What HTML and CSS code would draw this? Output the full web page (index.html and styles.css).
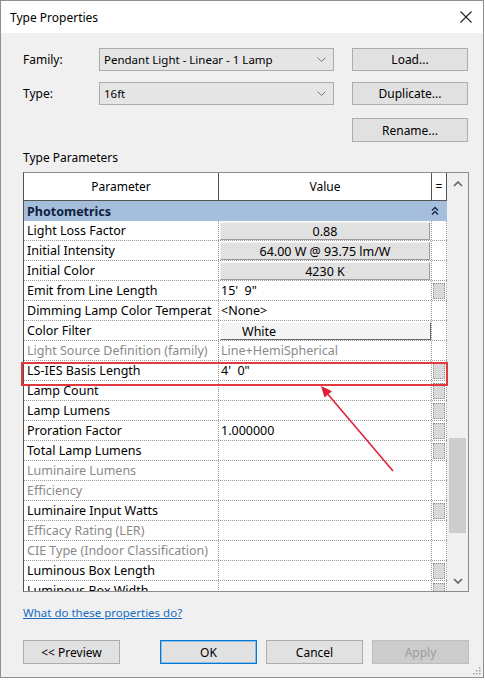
FILE: index.html
```html
<!DOCTYPE html>
<html>
<head>
<meta charset="utf-8">
<title>Type Properties</title>
<link rel="stylesheet" href="styles.css">
</head>
<body>
<div class="window">
  <div class="titlebar">
    <span class="title">Type Properties</span>
    <svg class="close" width="12" height="12" viewBox="0 0 12 12"><path d="M0.5 0.5 L11.5 11.5 M11.5 0.5 L0.5 11.5" stroke="#222" stroke-width="1.1" fill="none"/></svg>
  </div>
  <div class="content">
    <div class="form">
      <label class="flabel">Family:</label>
      <div class="combo"><span>Pendant Light - Linear - 1 Lamp</span><svg width="9" height="5" viewBox="0 0 9 5"><path d="M0.5 0.5 L4.5 4.5 L8.5 0.5" stroke="#7a7a7a" stroke-width="1" fill="none"/></svg></div>
      <button class="btn fbtn">Load...</button>
      <label class="flabel">Type:</label>
      <div class="combo"><span>16ft</span><svg width="9" height="5" viewBox="0 0 9 5"><path d="M0.5 0.5 L4.5 4.5 L8.5 0.5" stroke="#7a7a7a" stroke-width="1" fill="none"/></svg></div>
      <button class="btn fbtn">Duplicate...</button>
      <button class="btn fbtn rename">Rename...</button>
    </div>
    <div class="section-label">Type Parameters</div>
    <div class="gridbox">
      <div class="table">
        <div class="thead">
          <div>Parameter</div>
          <div>Value</div>
          <div class="eq">=</div>
        </div>
        <div class="group">
          <span>Photometrics</span>
          <svg width="8" height="10" viewBox="0 0 8 10"><path d="M1 4.5 L4 1.5 L7 4.5 M1 8.5 L4 5.5 L7 8.5" stroke="#1b2a4a" stroke-width="1.4" fill="none"/></svg>
        </div>
        <div class="row"><div class="cp">Light Loss Factor</div><div class="cv btncell"><div class="vbtn">0.88</div></div><div class="ce"></div></div>
        <div class="row"><div class="cp">Initial Intensity</div><div class="cv btncell"><div class="vbtn">64.00 W @ 93.75 lm/W</div></div><div class="ce"></div></div>
        <div class="row"><div class="cp">Initial Color</div><div class="cv btncell"><div class="vbtn">4230 K</div></div><div class="ce"></div></div>
        <div class="row"><div class="cp">Emit from Line Length</div><div class="cv">15'&nbsp; 9"</div><div class="ce"><div class="ebtn"></div></div></div>
        <div class="row"><div class="cp">Dimming Lamp Color Temperat</div><div class="cv">&lt;None&gt;</div><div class="ce"></div></div>
        <div class="row"><div class="cp">Color Filter</div><div class="cv btncell"><div class="wbtn">White</div></div><div class="ce"></div></div>
        <div class="row dis"><div class="cp">Light Source Definition (family)</div><div class="cv">Line+HemiSpherical</div><div class="ce"></div></div>
        <div class="row"><div class="cp">LS-IES Basis Length</div><div class="cv">4'&nbsp; 0"</div><div class="ce"><div class="ebtn"></div></div></div>
        <div class="row"><div class="cp">Lamp Count</div><div class="cv"></div><div class="ce"><div class="ebtn"></div></div></div>
        <div class="row"><div class="cp">Lamp Lumens</div><div class="cv"></div><div class="ce"><div class="ebtn"></div></div></div>
        <div class="row"><div class="cp">Proration Factor</div><div class="cv">1.000000</div><div class="ce"><div class="ebtn"></div></div></div>
        <div class="row"><div class="cp">Total Lamp Lumens</div><div class="cv"></div><div class="ce"><div class="ebtn"></div></div></div>
        <div class="row dis"><div class="cp">Luminaire Lumens</div><div class="cv"></div><div class="ce"></div></div>
        <div class="row dis"><div class="cp">Efficiency</div><div class="cv"></div><div class="ce"></div></div>
        <div class="row"><div class="cp">Luminaire Input Watts</div><div class="cv"></div><div class="ce"><div class="ebtn"></div></div></div>
        <div class="row dis"><div class="cp">Efficacy Rating (LER)</div><div class="cv"></div><div class="ce"></div></div>
        <div class="row dis"><div class="cp">CIE Type (Indoor Classification)</div><div class="cv"></div><div class="ce"></div></div>
        <div class="row"><div class="cp">Luminous Box Length</div><div class="cv"></div><div class="ce"><div class="ebtn"></div></div></div>
        <div class="row"><div class="cp">Luminous Box Width</div><div class="cv"></div><div class="ce"><div class="ebtn"></div></div></div>
      </div>
      <div class="scroll">
        <div class="sarrow"><svg width="10" height="6" viewBox="0 0 10 6"><path d="M1 5 L5 1 L9 5" stroke="#606060" stroke-width="1.6" fill="none"/></svg></div>
        <div class="track"><div class="thumb"></div></div>
        <div class="sarrow"><svg width="10" height="6" viewBox="0 0 10 6"><path d="M1 1 L5 5 L9 1" stroke="#606060" stroke-width="1.6" fill="none"/></svg></div>
      </div>
      <div class="highlight"></div>
      <svg class="arrow" width="444" height="418" viewBox="0 0 444 418">
        <path d="M369 298 L304.1 221.4" stroke="#e0203a" stroke-width="1.6" fill="none"/>
        <path d="M297 213 L308 218.2 L300.5 224.6 Z" fill="#e0203a"/>
      </svg>
    </div>
    <a class="help" href="#">What do these properties do?</a>
    <div class="actions">
      <button class="btn abtn">&lt;&lt; Preview</button>
      <div class="rgroup">
        <button class="btn abtn ok">OK</button>
        <button class="btn abtn">Cancel</button>
        <button class="btn abtn disabled">Apply</button>
      </div>
    </div>
  </div>
  <svg class="grip" width="8" height="8" viewBox="0 0 8 8"><g fill="#a0a0a0"><rect x="6" y="0" width="1.5" height="1.5"/><rect x="3" y="3" width="1.5" height="1.5"/><rect x="6" y="3" width="1.5" height="1.5"/><rect x="0" y="6" width="1.5" height="1.5"/><rect x="3" y="6" width="1.5" height="1.5"/><rect x="6" y="6" width="1.5" height="1.5"/></g></svg>
</div>
</body>
</html>
```
FILE: styles.css
```css
* { box-sizing: border-box; }
body {
  margin: 0;
  background: #fff;
  font-family: "Noto Sans", "Open Sans", sans-serif;
  font-size: 12px;
  color: #000;
}
.window {
  position: relative;
  width: 484px;
  height: 678px;
  border: 1px solid #8f8f8f;
  background: #f0f0f0;
  display: flex;
  flex-direction: column;
}
.titlebar {
  height: 32px;
  background: #fff;
  display: flex;
  align-items: center;
  justify-content: space-between;
  padding: 0 11px 0 9px;
}
.title { font-size: 12px; }
.content {
  flex: 1;
  padding: 15px 14px 0 22px;
  display: flex;
  flex-direction: column;
}
.form {
  display: grid;
  grid-template-columns: 76px 235px 134px;
  row-gap: 11px;
  align-items: center;
}
.flabel { padding-left: 0; }
.combo {
  height: 23px;
  background: #e5e5e5;
  border: 1px solid #acacac;
  display: flex;
  align-items: center;
  justify-content: space-between;
  padding: 0 7px 0 4px;
  font-size: 11.5px;
}
.btn {
  font: inherit;
  color: #000;
  height: 23px;
  background: #e1e1e1;
  border: 1px solid #adadad;
  padding: 0;
  text-align: center;
}
.fbtn { width: 116px; justify-self: end; }
.rename { grid-column: 3; margin-top: 2px; height: 24px; }
.section-label { margin-top: 8px; line-height: 16px; }
.gridbox {
  position: relative;
  margin-top: 6px;
  width: 446px;
  height: 420px;
  border: 1px solid #8c8c8c;
  border-left-color: #4f4f4f;
  display: flex;
  background: #fff;
}
.table { width: 423px; overflow: hidden; flex: none; font-size: 12.5px; }
.thead {
  display: grid;
  grid-template-columns: 195px 213px 15px;
  height: 28px;
  border-bottom: 1px solid #555;
  font-size: 12px;
}
.thead > div {
  border-right: 1px solid #555;
  display: flex;
  align-items: center;
  justify-content: center;
}
.group {
  height: 20px;
  background: #a5bedb;
  display: flex;
  align-items: center;
  justify-content: space-between;
  padding: 0 8px 0 3px;
  font-weight: bold;
  color: #0f1f3d;
}
.row {
  display: grid;
  grid-template-columns: 195px 213px 15px;
  height: 20px;
  border-bottom: 1px dotted #9a9a9a;
}
.row > div { border-right: 1px dotted #9a9a9a; }
.cp {
  padding-left: 3px;
  line-height: 20px;
  white-space: nowrap;
  overflow: hidden;
}
.cv {
  padding-left: 2px;
  line-height: 20px;
  white-space: nowrap;
  overflow: hidden;
}
.cv.btncell { padding: 1px 0 0 1px; }
.dis { color: #8a8a8a; }
.vbtn {
  height: 18px;
  width: 210px;
  background: #e1e1e1;
  border: 1px solid;
  border-color: #f2f2f2 #9a9a9a #9a9a9a #f2f2f2;
  text-align: center;
  line-height: 17px;
}
.wbtn {
  height: 18px;
  width: 211px;
  background: #f4f4f4;
  border: 1px solid;
  border-color: #ffffff #6a6a6a #6a6a6a #ffffff;
  padding-left: 21px;
  line-height: 18px;
}
.ce { padding: 2px 0 0 1px; }
.ebtn {
  width: 12px;
  height: 16px;
  background: #d9d9d9;
  border: 1px dotted #8c8c8c;
}
.scroll {
  flex: 1;
  display: flex;
  flex-direction: column;
  background: #f0f0f0;
}
.sarrow {
  height: 21px;
  display: flex;
  align-items: center;
  justify-content: center;
}
.track { flex: 1; padding: 244px 2px 0 2px; }
.thumb { height: 95px; background: #cdcdcd; }
.highlight {
  position: absolute;
  left: -3px;
  top: 189px;
  width: 427px;
  height: 24px;
  border: 2px solid #e03a3e;
}
.arrow {
  position: absolute;
  left: 0;
  top: 0;
  overflow: visible;
  pointer-events: none;
}
.help {
  margin-top: 13px;
  align-self: flex-start;
  color: #1a6cc0;
  text-decoration: underline;
  line-height: 16px;
  font-size: 11.5px;
}
.actions {
  margin-top: 19px;
  display: flex;
}
.rgroup {
  margin-left: auto;
  display: flex;
  gap: 9px;
}
.abtn { width: 97px; height: 24px; }
.ok {
  border-color: #0078d7;
  box-shadow: inset 0 0 0 1px rgba(0, 120, 215, 0.35);
}
.disabled {
  background: #cccccc;
  border-color: #bfbfbf;
  color: #9d9d9d;
}
.grip { position: absolute; right: 2px; bottom: 2px; }
```
